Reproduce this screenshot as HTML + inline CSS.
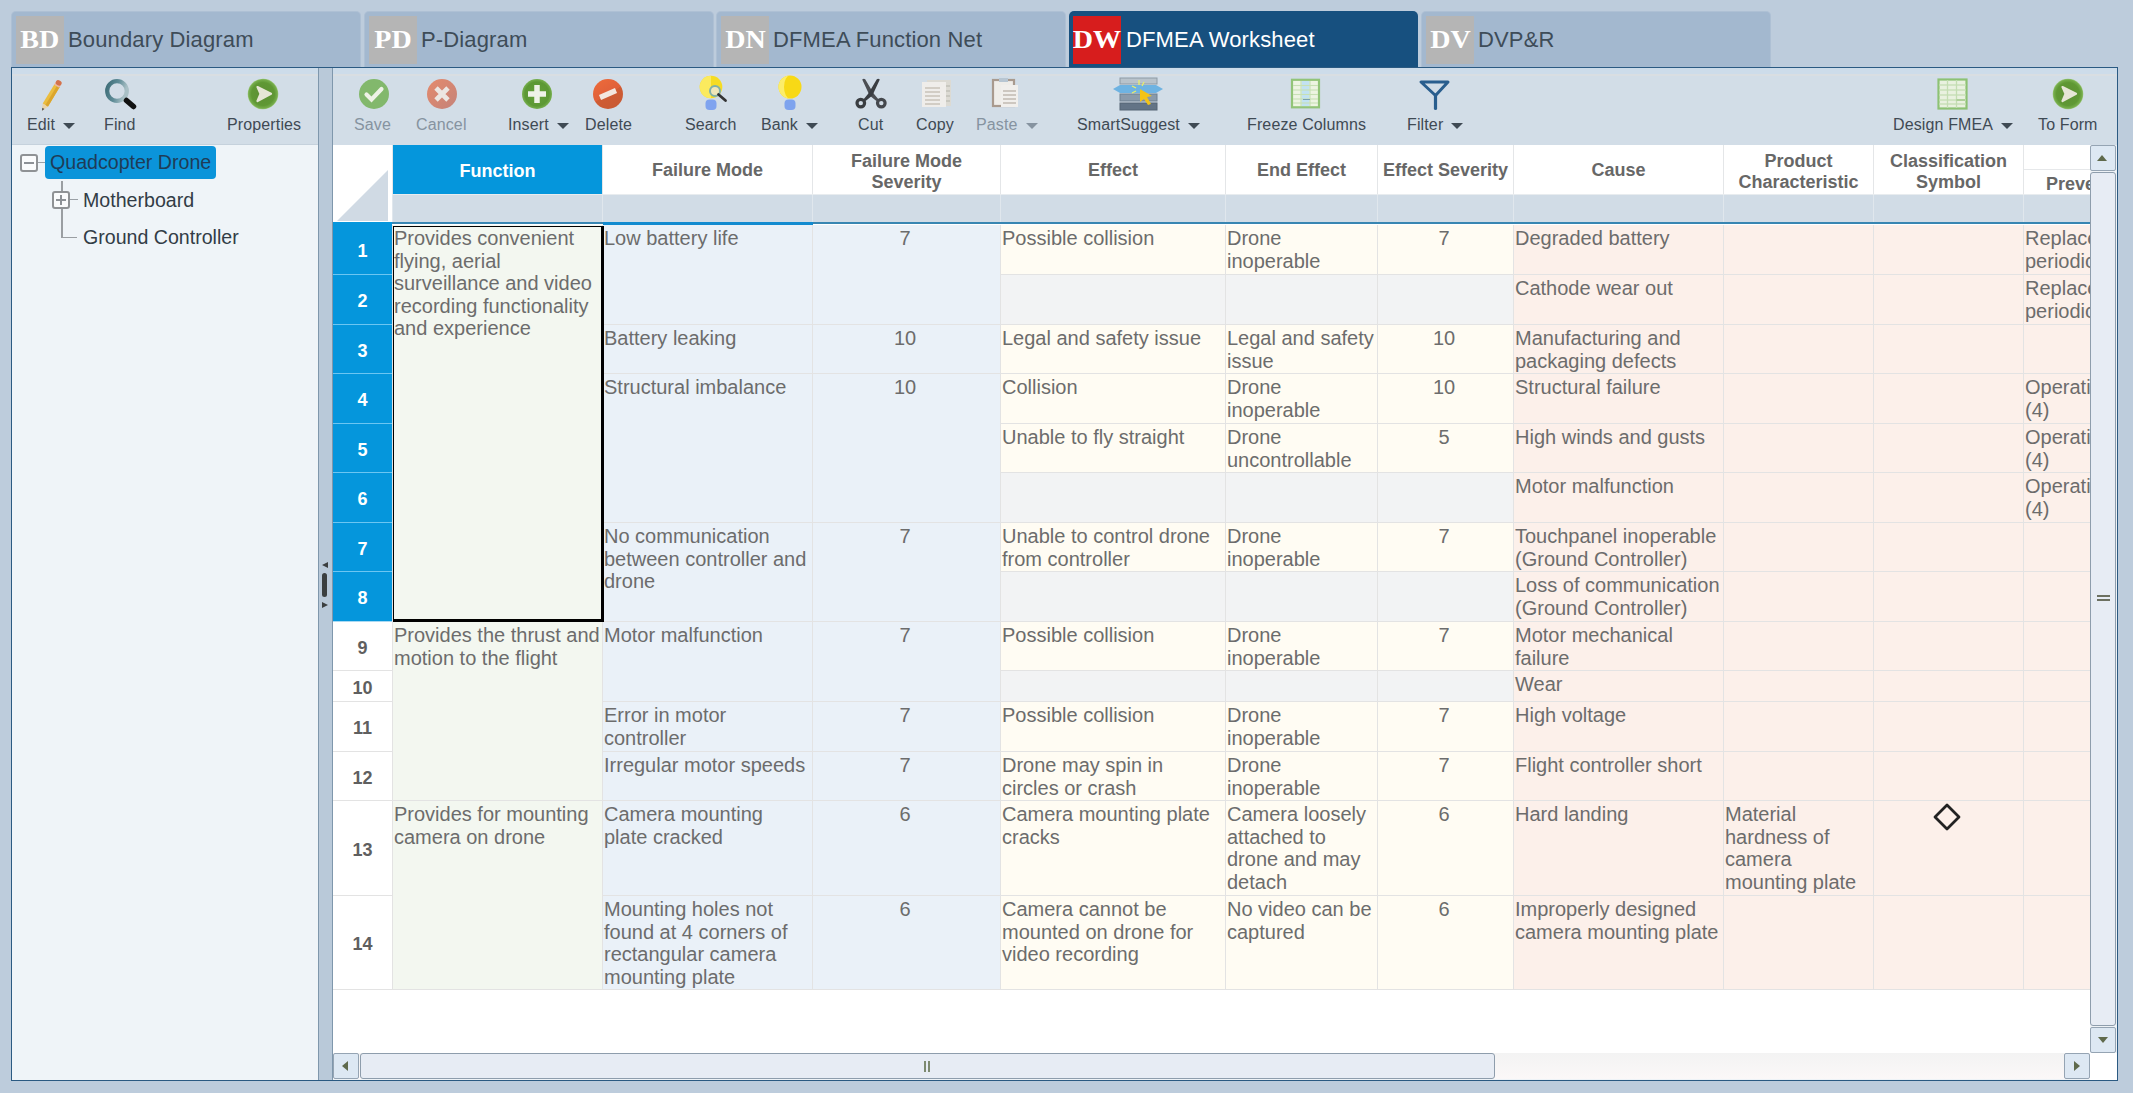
<!DOCTYPE html><html><head><meta charset="utf-8"><style>
*{box-sizing:border-box}
html,body{margin:0;padding:0}
body{width:2133px;height:1093px;position:relative;overflow:hidden;background:#bdccdc;font-family:'Liberation Sans', sans-serif;}
.ab{position:absolute}
.tab{position:absolute;top:11px;height:57px;width:350px;background:#a3b8cf;border-radius:5px 5px 0 0;box-shadow:inset 0 0 0 1px rgba(255,255,255,0.12)}
.badge{position:absolute;left:5px;top:5px;width:48px;height:48px;background:#b5b5b5;color:#fff;font-family:'Liberation Serif', serif;font-weight:bold;font-size:25.5px;line-height:47px;text-align:center;transform-origin:center}
.tabt{position:absolute;left:57px;top:0;height:57px;line-height:58px;font-size:22px;letter-spacing:0.14px;color:#3e4c58;white-space:nowrap}
.lbl{position:absolute;top:115px;font-size:16px;line-height:20px;letter-spacing:0.13px;color:#3f4a54;white-space:nowrap}
.lbl.dis{color:#8693a0}
.car{display:inline-block;width:0;height:0;border-left:6px solid transparent;border-right:6px solid transparent;border-top:6.5px solid #3f4a54;margin-left:8px;vertical-align:1.5px}
.dis .car{border-top-color:#8693a0}
.tn{position:absolute;font-size:19.6px;line-height:23px;color:#323c46;white-space:nowrap}
.c{position:absolute;overflow:hidden;font-size:20px;line-height:22.5px;color:#6c6c6c;padding:2px 2px 0 2px;word-wrap:break-word}
.hc{position:absolute;background:#fff;font-size:18px;font-weight:bold;color:#676767;text-align:center;display:flex;align-items:center;justify-content:center;line-height:21px}
.rh{position:absolute;left:333px;width:59px;font-size:18px;font-weight:bold;text-align:center;display:flex;align-items:center;justify-content:center}
</style></head><body>

<div class="tab" style="left:11px"><div class="badge"><span style="display:inline-block;transform:scaleX(1.1)">BD</span></div><div class="tabt">Boundary Diagram</div></div>
<div class="tab" style="left:364px"><div class="badge"><span style="display:inline-block;transform:scaleX(1.1)">PD</span></div><div class="tabt">P-Diagram</div></div>
<div class="tab" style="left:716px"><div class="badge"><span style="display:inline-block;transform:scaleX(1.1)">DN</span></div><div class="tabt">DFMEA Function Net</div></div>
<div class="tab" style="left:1069px;width:349px;background:#17507f;box-shadow:none"><div class="badge" style="left:4px;background:#d71d1d"><span style="display:inline-block;transform:scaleX(1.1)">DW</span></div><div class="tabt" style="left:57px;color:#fff">DFMEA Worksheet</div></div>
<div class="tab" style="left:1421px"><div class="badge"><span style="display:inline-block;transform:scaleX(1.1)">DV</span></div><div class="tabt">DVP&amp;R</div></div>
<div class="ab" style="left:11px;top:67px;width:2107px;height:1014px;border:1px solid #2b5a82;background:#eef3f7"></div>
<div class="ab" style="left:12px;top:68px;width:306px;height:77px;background:#d2dde7;border-bottom:1px solid #c5d1dc"></div>
<div class="ab" style="left:12px;top:68px;width:306px;height:6px;background:#cddcea"></div><div class="ab" style="left:12px;top:74px;width:306px;height:2px;background:#d9dee2"></div>
<div class="ab" style="left:12px;top:145px;width:306px;height:935px;background:#eff4f8"></div>
<div class="ab" style="left:318px;top:68px;width:15px;height:1012px;background:#b9c9d9;border-left:1px solid #7f97ac;border-right:1px solid #7f97ac"></div>
<div class="ab" style="left:322px;top:573px;width:5px;height:24px;background:#3b3f40;border-radius:2.5px"></div>
<div class="ab" style="left:322px;top:562px;width:0;height:0;border-top:3.5px solid transparent;border-bottom:3.5px solid transparent;border-right:6px solid #3b3f40"></div>
<div class="ab" style="left:322px;top:602px;width:0;height:0;border-top:3.5px solid transparent;border-bottom:3.5px solid transparent;border-left:6px solid #3b3f40"></div>
<div class="ab" style="left:333px;top:68px;width:1784px;height:77px;background:#d2dde7"></div>
<div class="ab" style="left:333px;top:68px;width:1784px;height:6px;background:#cddcea"></div><div class="ab" style="left:333px;top:74px;width:1784px;height:2px;background:#d9dee2"></div>
<svg class="ab" style="left:36px;top:74px;" width="32" height="40" viewBox="0 0 32 40"><g transform="rotate(31 16 20)"><rect x="13" y="10" width="6" height="23" fill="#ebbd3e"/><rect x="16" y="10" width="3" height="23" fill="#dba52c"/><rect x="13" y="8" width="6" height="3" fill="#e8b8a8"/><rect x="13" y="4.5" width="6" height="5" rx="2.5" fill="#d4724c"/><path d="M13 33 L19 33 L16 39.5 Z" fill="#ead3a6"/><path d="M14.8 36.8 L17.2 36.8 L16 39.5 Z" fill="#4a4a4a"/></g></svg>
<svg class="ab" style="left:100px;top:74px;" width="40" height="40" viewBox="0 0 40 40"><defs><linearGradient id="mg" x1="0" y1="0" x2="1" y2="0.3"><stop offset="0" stop-color="#3e6d78"/><stop offset="0.55" stop-color="#5f8c97"/><stop offset="1" stop-color="#a9c0c6"/></linearGradient></defs><circle cx="17" cy="17" r="9.8" fill="none" stroke="url(#mg)" stroke-width="4.2"/><line x1="26.5" y1="26.5" x2="33.5" y2="32.5" stroke="#111" stroke-width="5.5" stroke-linecap="round"/></svg>
<svg class="ab" style="left:246px;top:77px;" width="34" height="34" viewBox="0 0 34 34"><defs><radialGradient id="g263" cx="50%" cy="50%" r="50%"><stop offset="0" stop-color="#5d8f35"/><stop offset="0.75" stop-color="#5f9834"/><stop offset="0.93" stop-color="#76ad4c"/><stop offset="1" stop-color="#9cc77a"/></radialGradient></defs><circle cx="17" cy="17" r="15.3" fill="url(#g263)"/><path d="M11.5 10 L25 16.8 L11.5 24 L14.5 16.8 Z" fill="#e6e6d6" stroke="#e6e6d6" stroke-width="2.2" stroke-linejoin="round"/></svg>
<svg class="ab" style="left:2051px;top:77px;" width="34" height="34" viewBox="0 0 34 34"><defs><radialGradient id="g2068" cx="50%" cy="50%" r="50%"><stop offset="0" stop-color="#5d8f35"/><stop offset="0.75" stop-color="#5f9834"/><stop offset="0.93" stop-color="#76ad4c"/><stop offset="1" stop-color="#9cc77a"/></radialGradient></defs><circle cx="17" cy="17" r="15.3" fill="url(#g2068)"/><path d="M11.5 10 L25 16.8 L11.5 24 L14.5 16.8 Z" fill="#e6e6d6" stroke="#e6e6d6" stroke-width="2.2" stroke-linejoin="round"/></svg>
<svg class="ab" style="left:357px;top:77px;" width="34" height="34" viewBox="0 0 34 34"><circle cx="17" cy="17" r="15" fill="#82b86c"/><path d="M9.5 17.5 L14.5 22.5 L24.5 12" fill="none" stroke="#eef2e6" stroke-width="4.2" stroke-linecap="round"/></svg>
<svg class="ab" style="left:425px;top:77px;" width="34" height="34" viewBox="0 0 34 34"><defs><linearGradient id="cg" x1="0" y1="0" x2="1" y2="1"><stop offset="0" stop-color="#e58a6c"/><stop offset="1" stop-color="#c4837a"/></linearGradient></defs><circle cx="17" cy="17" r="15" fill="url(#cg)"/><path d="M11 11 L23 23 M23 11 L11 23" stroke="#ece6e2" stroke-width="4.8"/></svg>
<svg class="ab" style="left:520px;top:77px;" width="34" height="34" viewBox="0 0 34 34"><defs><radialGradient id="ig" cx="50%" cy="50%" r="50%"><stop offset="0" stop-color="#64a03a"/><stop offset="0.8" stop-color="#5c9834"/><stop offset="1" stop-color="#78b050"/></radialGradient></defs><circle cx="17" cy="17" r="15" fill="url(#ig)"/><path d="M17 8 V26 M8 17 H26" stroke="#eef2e8" stroke-width="5.5"/></svg>
<svg class="ab" style="left:591px;top:77px;" width="34" height="34" viewBox="0 0 34 34"><defs><linearGradient id="dg" x1="0.2" y1="0" x2="0.8" y2="1"><stop offset="0" stop-color="#ec6a3a"/><stop offset="0.5" stop-color="#e0603a"/><stop offset="0.51" stop-color="#cf5c34"/><stop offset="1" stop-color="#c85a34"/></linearGradient></defs><circle cx="17" cy="17" r="15" fill="url(#dg)"/><path d="M9 20.5 L25 13.5" stroke="#f3e7df" stroke-width="5.2"/></svg>
<svg class="ab" style="left:695px;top:72px;" width="36" height="40" viewBox="0 0 36 40"><circle cx="16" cy="15" r="11.3" fill="#f6dc22"/><path d="M16 3.7 A11.3 11.3 0 0 0 16 26.3 Z" fill="#fbea5e"/><rect x="10.5" y="27.5" width="11" height="10.5" rx="4" fill="#7fa3ef"/><circle cx="20" cy="19" r="5" fill="#efe6b8" stroke="#7fb0a8" stroke-width="2"/><line x1="23.5" y1="22.5" x2="30.5" y2="28.5" stroke="#333" stroke-width="2.8" stroke-linecap="round"/></svg>
<svg class="ab" style="left:774px;top:72px;" width="32" height="40" viewBox="0 0 32 40"><circle cx="16" cy="15" r="11.5" fill="#f8d916"/><path d="M16 3.5 A11.5 11.5 0 0 0 16 26.5 A6 11.5 0 0 1 16 3.5 Z" fill="#fced6a"/><rect x="10.5" y="27.5" width="11" height="10.5" rx="4" fill="#7ea3ee"/></svg>
<svg class="ab" style="left:855px;top:76px;" width="32" height="34" viewBox="0 0 32 34"><path d="M7.2 3.6 Q8.7 2.2 10.2 3.3 L18.6 17.5 L23.6 23.6 L21.4 25 L14.6 19.6 Z" fill="#4b4e53"/><path d="M24.8 3.6 Q23.3 2.2 21.8 3.3 L13.4 17.5 L8.4 23.6 L10.6 25 L17.4 19.6 Z" fill="#3a3d42"/><circle cx="5.8" cy="27.1" r="3.8" fill="none" stroke="#3a3d41" stroke-width="3.2"/><circle cx="26.3" cy="27.1" r="3.8" fill="none" stroke="#45484d" stroke-width="3.2"/></svg>
<svg class="ab" style="left:919px;top:77px;" width="34" height="32" viewBox="0 0 34 32"><rect x="8" y="3" width="24" height="26" fill="#dcdad3"/><rect x="3" y="5" width="24" height="25" fill="#efedea"/><g stroke="#c9c2b8" stroke-width="1.5"><line x1="6" y1="11" x2="21" y2="11"/><line x1="6" y1="15" x2="21" y2="15"/><line x1="6" y1="19" x2="21" y2="19"/><line x1="6" y1="23" x2="21" y2="23"/><line x1="6" y1="27" x2="21" y2="27"/></g><g stroke="#c2c0b8" stroke-width="1.5"><line x1="27" y1="9" x2="31" y2="9"/><line x1="27" y1="14" x2="31" y2="14"/><line x1="27" y1="19" x2="31" y2="19"/><line x1="27" y1="24" x2="31" y2="24"/></g></svg>
<svg class="ab" style="left:990px;top:76px;" width="30" height="34" viewBox="0 0 30 34"><rect x="3" y="4" width="21" height="26" fill="#efede9" stroke="#a99a8e" stroke-width="2.2"/><rect x="9" y="2" width="9" height="4" fill="#b8c6d2"/><rect x="11" y="9" width="17" height="22" fill="#f1efec"/><g stroke="#bdb7ae" stroke-width="1.4"><line x1="13" y1="15" x2="26" y2="15"/><line x1="13" y1="19" x2="26" y2="19"/><line x1="13" y1="23" x2="26" y2="23"/><line x1="13" y1="27" x2="26" y2="27"/></g></svg>
<svg class="ab" style="left:1110px;top:74px;" width="56" height="38" viewBox="0 0 56 38"><rect x="10" y="4" width="37" height="6" fill="#b9c3cb" stroke="#8e9ba6" stroke-width="1"/><rect x="10" y="20" width="37" height="7" fill="#8a9aaa" stroke="#6f8090" stroke-width="1"/><rect x="10" y="29" width="37" height="7" fill="#637486" stroke="#556575" stroke-width="1"/><path d="M3 15 L10 11 L46 11 L53 15 L46 19 L10 19 Z" fill="#6eb3e2"/><path d="M30 15 L42 22 L37 23 L41 30 L38 31 L34 25 L30 28 Z" fill="#f3c317"/><g stroke="#e9ef6a" stroke-width="1.3"><line x1="29" y1="6" x2="29" y2="11"/><line x1="22" y1="12" x2="26" y2="14"/><line x1="22" y1="19" x2="26" y2="17"/><line x1="34" y1="8" x2="32" y2="12"/></g></svg>
<svg class="ab" style="left:1290px;top:78px;" width="32" height="32" viewBox="0 0 32 32"><rect x="2" y="1.8" width="27" height="27.5" fill="#edf4e2" stroke="#92c478" stroke-width="2.2"/><rect x="11.5" y="3" width="8" height="25" fill="#c2e2f2"/><g stroke="#c7e0b4" stroke-width="1.1"><line x1="3" y1="7.5" x2="28" y2="7.5"/><line x1="3" y1="12" x2="28" y2="12"/><line x1="3" y1="16.5" x2="28" y2="16.5"/><line x1="3" y1="21" x2="28" y2="21"/><line x1="3" y1="25" x2="28" y2="25"/><line x1="11" y1="3" x2="11" y2="28"/><line x1="20" y1="3" x2="20" y2="28"/></g><path d="M20 21.5 L13 21.5" stroke="#7aa0b0" stroke-width="1"/></svg>
<svg class="ab" style="left:1418px;top:79px;" width="36" height="32" viewBox="0 0 36 32"><path d="M3 3 L30 3 L17.5 16.5 Z" fill="none" stroke="#295e8e" stroke-width="3" stroke-linejoin="round"/><line x1="17.5" y1="16" x2="17.5" y2="29.5" stroke="#295e8e" stroke-width="3.2" stroke-linecap="round"/></svg>
<svg class="ab" style="left:1936px;top:77px;" width="34" height="34" viewBox="0 0 34 34"><rect x="2.5" y="2.5" width="28" height="29" fill="#e9f1df" stroke="#8dc274" stroke-width="2.2"/><g stroke="#c4ddb2" stroke-width="1.3"><line x1="3" y1="8" x2="30" y2="8"/><line x1="3" y1="13" x2="30" y2="13"/><line x1="3" y1="18" x2="30" y2="18"/><line x1="3" y1="23" x2="30" y2="23"/><line x1="3" y1="27" x2="30" y2="27"/><line x1="11.5" y1="3" x2="11.5" y2="31"/><line x1="20.5" y1="3" x2="20.5" y2="31"/></g><path d="M20.5 23 H29" stroke="#9cc486" stroke-width="1.3"/></svg>
<div class="lbl" style="left:27px">Edit<span class="car"></span></div>
<div class="lbl" style="left:104px">Find</div>
<div class="lbl" style="left:227px">Properties</div>
<div class="lbl dis" style="left:354px">Save</div>
<div class="lbl dis" style="left:416px">Cancel</div>
<div class="lbl" style="left:508px">Insert<span class="car"></span></div>
<div class="lbl" style="left:585px">Delete</div>
<div class="lbl" style="left:685px">Search</div>
<div class="lbl" style="left:761px">Bank<span class="car"></span></div>
<div class="lbl" style="left:858px">Cut</div>
<div class="lbl" style="left:916px">Copy</div>
<div class="lbl dis" style="left:976px">Paste<span class="car"></span></div>
<div class="lbl" style="left:1077px">SmartSuggest<span class="car"></span></div>
<div class="lbl" style="left:1247px">Freeze Columns</div>
<div class="lbl" style="left:1407px">Filter<span class="car"></span></div>
<div class="lbl" style="left:1893px">Design FMEA<span class="car"></span></div>
<div class="lbl" style="left:2038px">To Form</div>
<div class="ab" style="left:45px;top:146px;width:171px;height:33px;background:#0b94da;border-radius:4px"></div>
<div class="tn" style="left:50px;top:150.5px;color:#1f3c57">Quadcopter Drone</div>
<div class="tn" style="left:83px;top:189px">Motherboard</div>
<div class="tn" style="left:83px;top:226px">Ground Controller</div>
<div class="ab" style="left:37px;top:162px;width:8px;height:1px;background:#9aa0a6"></div>
<div class="ab" style="left:61px;top:181px;width:1.5px;height:10px;background:#9a9ea2"></div>
<div class="ab" style="left:61px;top:209px;width:1.5px;height:28px;background:#9a9ea2"></div>
<div class="ab" style="left:61px;top:236.5px;width:16px;height:1.5px;background:#9a9ea2"></div>
<div class="ab" style="left:70px;top:199px;width:8px;height:1px;background:#9aa0a6"></div>
<div class="ab" style="left:20px;top:154px;width:17.5px;height:18px;border:2px solid #8f9295;border-radius:3px;background:#fafbfc"></div>
<div class="ab" style="left:24px;top:162px;width:10px;height:2px;background:#8d9196"></div>
<div class="ab" style="left:52px;top:191px;width:18px;height:18px;border:2px solid #8f9295;border-radius:3px;background:#fafbfc"></div>
<div class="ab" style="left:56px;top:199px;width:10px;height:1.5px;background:#8d9196"></div>
<div class="ab" style="left:60.25px;top:195px;width:1.5px;height:10px;background:#8d9196"></div>
<div class="ab" style="left:333px;top:145px;width:1757px;height:908px;background:#fff;overflow:hidden">
<div class="ab" style="left:0px;top:50px;width:1960px;height:27px;background:#d1dce6"></div>
<div class="ab" style="left:59px;top:0px;width:1px;height:50px;background:#e4e6e8"></div>
<div class="ab" style="left:59px;top:50px;width:1px;height:27px;background:#e0e7ed"></div>
<div class="ab" style="left:269px;top:0px;width:1px;height:50px;background:#e4e6e8"></div>
<div class="ab" style="left:269px;top:50px;width:1px;height:27px;background:#e0e7ed"></div>
<div class="ab" style="left:479px;top:0px;width:1px;height:50px;background:#e4e6e8"></div>
<div class="ab" style="left:479px;top:50px;width:1px;height:27px;background:#e0e7ed"></div>
<div class="ab" style="left:667px;top:0px;width:1px;height:50px;background:#e4e6e8"></div>
<div class="ab" style="left:667px;top:50px;width:1px;height:27px;background:#e0e7ed"></div>
<div class="ab" style="left:892px;top:0px;width:1px;height:50px;background:#e4e6e8"></div>
<div class="ab" style="left:892px;top:50px;width:1px;height:27px;background:#e0e7ed"></div>
<div class="ab" style="left:1044px;top:0px;width:1px;height:50px;background:#e4e6e8"></div>
<div class="ab" style="left:1044px;top:50px;width:1px;height:27px;background:#e0e7ed"></div>
<div class="ab" style="left:1180px;top:0px;width:1px;height:50px;background:#e4e6e8"></div>
<div class="ab" style="left:1180px;top:50px;width:1px;height:27px;background:#e0e7ed"></div>
<div class="ab" style="left:1390px;top:0px;width:1px;height:50px;background:#e4e6e8"></div>
<div class="ab" style="left:1390px;top:50px;width:1px;height:27px;background:#e0e7ed"></div>
<div class="ab" style="left:1540px;top:0px;width:1px;height:50px;background:#e4e6e8"></div>
<div class="ab" style="left:1540px;top:50px;width:1px;height:27px;background:#e0e7ed"></div>
<div class="ab" style="left:1690px;top:0px;width:1px;height:50px;background:#e4e6e8"></div>
<div class="ab" style="left:1690px;top:50px;width:1px;height:27px;background:#e0e7ed"></div>
<div class="ab" style="left:0px;top:49px;width:1960px;height:1px;background:#e8ecef"></div>
<div class="ab" style="left:0px;top:0px;width:59px;height:78px;background:#fff"><svg width="59" height="78" style="position:absolute;left:0;top:0"><path d="M4 76 L55 25 L55 76 Z" fill="#d0dae4"/></svg></div>
<div class="ab" style="left:60px;top:0px;width:209px;height:49px;background:#0596dc;color:#fff;font-size:18px;font-weight:bold;display:flex;align-items:center;justify-content:center;line-height:21px;text-align:center;padding-top:3px">Function</div>
<div class="ab" style="left:270px;top:0px;width:209px;height:49px;color:#676767;font-size:18px;font-weight:bold;display:flex;align-items:center;justify-content:center;line-height:21.4px;text-align:center;padding-top:3px">Failure Mode</div>
<div class="ab" style="left:480px;top:0px;width:187px;height:49px;color:#676767;font-size:18px;font-weight:bold;display:flex;align-items:center;justify-content:center;line-height:21.4px;text-align:center;padding-top:5px">Failure Mode<br>Severity</div>
<div class="ab" style="left:668px;top:0px;width:224px;height:49px;color:#676767;font-size:18px;font-weight:bold;display:flex;align-items:center;justify-content:center;line-height:21.4px;text-align:center;padding-top:3px">Effect</div>
<div class="ab" style="left:893px;top:0px;width:151px;height:49px;color:#676767;font-size:18px;font-weight:bold;display:flex;align-items:center;justify-content:center;line-height:21.4px;text-align:center;padding-top:3px">End Effect</div>
<div class="ab" style="left:1045px;top:0px;width:135px;height:49px;color:#676767;font-size:18px;font-weight:bold;display:flex;align-items:center;justify-content:center;line-height:21.4px;text-align:center;padding-top:3px">Effect Severity</div>
<div class="ab" style="left:1181px;top:0px;width:209px;height:49px;color:#676767;font-size:18px;font-weight:bold;display:flex;align-items:center;justify-content:center;line-height:21.4px;text-align:center;padding-top:3px">Cause</div>
<div class="ab" style="left:1391px;top:0px;width:149px;height:49px;color:#676767;font-size:18px;font-weight:bold;display:flex;align-items:center;justify-content:center;line-height:21.4px;text-align:center;padding-top:5px">Product<br>Characteristic</div>
<div class="ab" style="left:1541px;top:0px;width:149px;height:49px;color:#676767;font-size:18px;font-weight:bold;display:flex;align-items:center;justify-content:center;line-height:21.4px;text-align:center;padding-top:5px">Classification<br>Symbol</div>
<div class="ab" style="left:1691px;top:24px;width:300px;height:1px;background:#e6e8ea"></div>
<div class="ab" style="left:1691px;top:25px;width:260px;height:24px;color:#676767;font-size:18px;font-weight:bold;line-height:21px;padding-left:22px;white-space:nowrap;padding-top:4px">Prevention Controls</div>
<div class="ab" style="left:0px;top:77px;width:1960px;height:2px;background:#3886b2"></div>
<div class="ab" style="left:270px;top:77px;width:210px;height:3px;background:#128bd0"></div>
<div class="ab" style="left:0px;top:77px;width:59px;height:3px;background:#0596dc"></div>
<div class="ab" style="left:0px;top:80px;width:1960px;height:765px;background:#e3e3e3"></div>
<div class="ab" style="left:0px;top:80px;width:59px;height:49px;background:#0596dc;color:#fff;font-size:18px;font-weight:bold;display:flex;align-items:center;justify-content:center;padding-top:4px">1</div>
<div class="ab" style="left:0px;top:130px;width:59px;height:49px;background:#0596dc;color:#fff;font-size:18px;font-weight:bold;display:flex;align-items:center;justify-content:center;padding-top:4px">2</div>
<div class="ab" style="left:0px;top:180px;width:59px;height:48px;background:#0596dc;color:#fff;font-size:18px;font-weight:bold;display:flex;align-items:center;justify-content:center;padding-top:4px">3</div>
<div class="ab" style="left:0px;top:229px;width:59px;height:49px;background:#0596dc;color:#fff;font-size:18px;font-weight:bold;display:flex;align-items:center;justify-content:center;padding-top:4px">4</div>
<div class="ab" style="left:0px;top:279px;width:59px;height:48px;background:#0596dc;color:#fff;font-size:18px;font-weight:bold;display:flex;align-items:center;justify-content:center;padding-top:4px">5</div>
<div class="ab" style="left:0px;top:328px;width:59px;height:49px;background:#0596dc;color:#fff;font-size:18px;font-weight:bold;display:flex;align-items:center;justify-content:center;padding-top:4px">6</div>
<div class="ab" style="left:0px;top:378px;width:59px;height:48px;background:#0596dc;color:#fff;font-size:18px;font-weight:bold;display:flex;align-items:center;justify-content:center;padding-top:4px">7</div>
<div class="ab" style="left:0px;top:427px;width:59px;height:49px;background:#0596dc;color:#fff;font-size:18px;font-weight:bold;display:flex;align-items:center;justify-content:center;padding-top:4px">8</div>
<div class="ab" style="left:0px;top:477px;width:59px;height:48px;background:#fff;color:#5f5f5f;font-size:18px;font-weight:bold;display:flex;align-items:center;justify-content:center;padding-top:4px">9</div>
<div class="ab" style="left:0px;top:526px;width:59px;height:30px;background:#fff;color:#5f5f5f;font-size:18px;font-weight:bold;display:flex;align-items:center;justify-content:center;padding-top:4px">10</div>
<div class="ab" style="left:0px;top:557px;width:59px;height:49px;background:#fff;color:#5f5f5f;font-size:18px;font-weight:bold;display:flex;align-items:center;justify-content:center;padding-top:4px">11</div>
<div class="ab" style="left:0px;top:607px;width:59px;height:48px;background:#fff;color:#5f5f5f;font-size:18px;font-weight:bold;display:flex;align-items:center;justify-content:center;padding-top:4px">12</div>
<div class="ab" style="left:0px;top:656px;width:59px;height:94px;background:#fff;color:#5f5f5f;font-size:18px;font-weight:bold;display:flex;align-items:center;justify-content:center;padding-top:4px">13</div>
<div class="ab" style="left:0px;top:751px;width:59px;height:93px;background:#fff;color:#5f5f5f;font-size:18px;font-weight:bold;display:flex;align-items:center;justify-content:center;padding-top:4px">14</div>
<div class="ab" style="left:0px;top:129px;width:59px;height:1px;background:#6cc6f2"></div>
<div class="ab" style="left:0px;top:179px;width:59px;height:1px;background:#6cc6f2"></div>
<div class="ab" style="left:0px;top:228px;width:59px;height:1px;background:#6cc6f2"></div>
<div class="ab" style="left:0px;top:278px;width:59px;height:1px;background:#6cc6f2"></div>
<div class="ab" style="left:0px;top:327px;width:59px;height:1px;background:#6cc6f2"></div>
<div class="ab" style="left:0px;top:377px;width:59px;height:1px;background:#6cc6f2"></div>
<div class="ab" style="left:0px;top:426px;width:59px;height:1px;background:#6cc6f2"></div>
<div class="ab" style="left:0px;top:476px;width:59px;height:1px;background:#a9d9f2"></div>
<div class="ab" style="left:60px;top:80px;width:209px;height:396px;background:#f3f7f0;overflow:hidden;font-size:20px;line-height:22.5px;color:#6c6c6c;padding:2px 1px 0 1px;">Provides convenient flying, aerial surveillance and video recording functionality and experience</div>
<div class="ab" style="left:60px;top:477px;width:209px;height:178px;background:#f3f7f0;overflow:hidden;font-size:20px;line-height:22.5px;color:#6c6c6c;padding:2px 1px 0 1px;">Provides the thrust and motion to the flight</div>
<div class="ab" style="left:60px;top:656px;width:209px;height:188px;background:#f3f7f0;overflow:hidden;font-size:20px;line-height:22.5px;color:#6c6c6c;padding:2px 1px 0 1px;">Provides for mounting camera on drone</div>
<div class="ab" style="left:270px;top:80px;width:209px;height:99px;background:#eaf1f8;overflow:hidden;font-size:20px;line-height:22.5px;color:#6c6c6c;padding:2px 3px 0 1px;">Low battery life</div>
<div class="ab" style="left:480px;top:80px;width:187px;height:99px;background:#eaf1f8;overflow:hidden;font-size:20px;line-height:22.5px;color:#6c6c6c;padding:2px 3px 0 1px;text-align:center;padding:2px 4px 0 1px;">7</div>
<div class="ab" style="left:270px;top:180px;width:209px;height:48px;background:#eaf1f8;overflow:hidden;font-size:20px;line-height:22.5px;color:#6c6c6c;padding:2px 3px 0 1px;">Battery leaking</div>
<div class="ab" style="left:480px;top:180px;width:187px;height:48px;background:#eaf1f8;overflow:hidden;font-size:20px;line-height:22.5px;color:#6c6c6c;padding:2px 3px 0 1px;text-align:center;padding:2px 4px 0 1px;">10</div>
<div class="ab" style="left:270px;top:229px;width:209px;height:148px;background:#eaf1f8;overflow:hidden;font-size:20px;line-height:22.5px;color:#6c6c6c;padding:2px 3px 0 1px;">Structural imbalance</div>
<div class="ab" style="left:480px;top:229px;width:187px;height:148px;background:#eaf1f8;overflow:hidden;font-size:20px;line-height:22.5px;color:#6c6c6c;padding:2px 3px 0 1px;text-align:center;padding:2px 4px 0 1px;">10</div>
<div class="ab" style="left:270px;top:378px;width:209px;height:98px;background:#eaf1f8;overflow:hidden;font-size:20px;line-height:22.5px;color:#6c6c6c;padding:2px 3px 0 1px;">No communication between controller and drone</div>
<div class="ab" style="left:480px;top:378px;width:187px;height:98px;background:#eaf1f8;overflow:hidden;font-size:20px;line-height:22.5px;color:#6c6c6c;padding:2px 3px 0 1px;text-align:center;padding:2px 4px 0 1px;">7</div>
<div class="ab" style="left:270px;top:477px;width:209px;height:79px;background:#eaf1f8;overflow:hidden;font-size:20px;line-height:22.5px;color:#6c6c6c;padding:2px 3px 0 1px;">Motor malfunction</div>
<div class="ab" style="left:480px;top:477px;width:187px;height:79px;background:#eaf1f8;overflow:hidden;font-size:20px;line-height:22.5px;color:#6c6c6c;padding:2px 3px 0 1px;text-align:center;padding:2px 4px 0 1px;">7</div>
<div class="ab" style="left:270px;top:557px;width:209px;height:49px;background:#eaf1f8;overflow:hidden;font-size:20px;line-height:22.5px;color:#6c6c6c;padding:2px 3px 0 1px;">Error in motor controller</div>
<div class="ab" style="left:480px;top:557px;width:187px;height:49px;background:#eaf1f8;overflow:hidden;font-size:20px;line-height:22.5px;color:#6c6c6c;padding:2px 3px 0 1px;text-align:center;padding:2px 4px 0 1px;">7</div>
<div class="ab" style="left:270px;top:607px;width:209px;height:48px;background:#eaf1f8;overflow:hidden;font-size:20px;line-height:22.5px;color:#6c6c6c;padding:2px 3px 0 1px;">Irregular motor speeds</div>
<div class="ab" style="left:480px;top:607px;width:187px;height:48px;background:#eaf1f8;overflow:hidden;font-size:20px;line-height:22.5px;color:#6c6c6c;padding:2px 3px 0 1px;text-align:center;padding:2px 4px 0 1px;">7</div>
<div class="ab" style="left:270px;top:656px;width:209px;height:94px;background:#eaf1f8;overflow:hidden;font-size:20px;line-height:22.5px;color:#6c6c6c;padding:2px 3px 0 1px;">Camera mounting plate cracked</div>
<div class="ab" style="left:480px;top:656px;width:187px;height:94px;background:#eaf1f8;overflow:hidden;font-size:20px;line-height:22.5px;color:#6c6c6c;padding:2px 3px 0 1px;text-align:center;padding:2px 4px 0 1px;">6</div>
<div class="ab" style="left:270px;top:751px;width:209px;height:93px;background:#eaf1f8;overflow:hidden;font-size:20px;line-height:22.5px;color:#6c6c6c;padding:2px 3px 0 1px;">Mounting holes not found at 4 corners of rectangular camera mounting plate</div>
<div class="ab" style="left:480px;top:751px;width:187px;height:93px;background:#eaf1f8;overflow:hidden;font-size:20px;line-height:22.5px;color:#6c6c6c;padding:2px 3px 0 1px;text-align:center;padding:2px 4px 0 1px;">6</div>
<div class="ab" style="left:668px;top:80px;width:224px;height:49px;background:#fffcf3;overflow:hidden;font-size:20px;line-height:22.5px;color:#6c6c6c;padding:2px 3px 0 1px;">Possible collision</div>
<div class="ab" style="left:893px;top:80px;width:151px;height:49px;background:#fffcf3;overflow:hidden;font-size:20px;line-height:22.5px;color:#6c6c6c;padding:2px 3px 0 1px;">Drone inoperable</div>
<div class="ab" style="left:1045px;top:80px;width:135px;height:49px;background:#fffcf3;overflow:hidden;font-size:20px;line-height:22.5px;color:#6c6c6c;padding:2px 3px 0 1px;text-align:center;padding:2px 4px 0 1px;">7</div>
<div class="ab" style="left:668px;top:130px;width:224px;height:49px;background:#f2f3f4;overflow:hidden;font-size:20px;line-height:22.5px;color:#6c6c6c;padding:2px 3px 0 1px;"></div>
<div class="ab" style="left:893px;top:130px;width:151px;height:49px;background:#f2f3f4;overflow:hidden;font-size:20px;line-height:22.5px;color:#6c6c6c;padding:2px 3px 0 1px;"></div>
<div class="ab" style="left:1045px;top:130px;width:135px;height:49px;background:#f2f3f4;overflow:hidden;font-size:20px;line-height:22.5px;color:#6c6c6c;padding:2px 3px 0 1px;"></div>
<div class="ab" style="left:668px;top:180px;width:224px;height:48px;background:#fffcf3;overflow:hidden;font-size:20px;line-height:22.5px;color:#6c6c6c;padding:2px 3px 0 1px;">Legal and safety issue</div>
<div class="ab" style="left:893px;top:180px;width:151px;height:48px;background:#fffcf3;overflow:hidden;font-size:20px;line-height:22.5px;color:#6c6c6c;padding:2px 3px 0 1px;">Legal and safety issue</div>
<div class="ab" style="left:1045px;top:180px;width:135px;height:48px;background:#fffcf3;overflow:hidden;font-size:20px;line-height:22.5px;color:#6c6c6c;padding:2px 3px 0 1px;text-align:center;padding:2px 4px 0 1px;">10</div>
<div class="ab" style="left:668px;top:229px;width:224px;height:49px;background:#fffcf3;overflow:hidden;font-size:20px;line-height:22.5px;color:#6c6c6c;padding:2px 3px 0 1px;">Collision</div>
<div class="ab" style="left:893px;top:229px;width:151px;height:49px;background:#fffcf3;overflow:hidden;font-size:20px;line-height:22.5px;color:#6c6c6c;padding:2px 3px 0 1px;">Drone inoperable</div>
<div class="ab" style="left:1045px;top:229px;width:135px;height:49px;background:#fffcf3;overflow:hidden;font-size:20px;line-height:22.5px;color:#6c6c6c;padding:2px 3px 0 1px;text-align:center;padding:2px 4px 0 1px;">10</div>
<div class="ab" style="left:668px;top:279px;width:224px;height:48px;background:#fffcf3;overflow:hidden;font-size:20px;line-height:22.5px;color:#6c6c6c;padding:2px 3px 0 1px;">Unable to fly straight</div>
<div class="ab" style="left:893px;top:279px;width:151px;height:48px;background:#fffcf3;overflow:hidden;font-size:20px;line-height:22.5px;color:#6c6c6c;padding:2px 3px 0 1px;">Drone uncontrollable</div>
<div class="ab" style="left:1045px;top:279px;width:135px;height:48px;background:#fffcf3;overflow:hidden;font-size:20px;line-height:22.5px;color:#6c6c6c;padding:2px 3px 0 1px;text-align:center;padding:2px 4px 0 1px;">5</div>
<div class="ab" style="left:668px;top:328px;width:224px;height:49px;background:#f2f3f4;overflow:hidden;font-size:20px;line-height:22.5px;color:#6c6c6c;padding:2px 3px 0 1px;"></div>
<div class="ab" style="left:893px;top:328px;width:151px;height:49px;background:#f2f3f4;overflow:hidden;font-size:20px;line-height:22.5px;color:#6c6c6c;padding:2px 3px 0 1px;"></div>
<div class="ab" style="left:1045px;top:328px;width:135px;height:49px;background:#f2f3f4;overflow:hidden;font-size:20px;line-height:22.5px;color:#6c6c6c;padding:2px 3px 0 1px;"></div>
<div class="ab" style="left:668px;top:378px;width:224px;height:48px;background:#fffcf3;overflow:hidden;font-size:20px;line-height:22.5px;color:#6c6c6c;padding:2px 3px 0 1px;">Unable to control drone from controller</div>
<div class="ab" style="left:893px;top:378px;width:151px;height:48px;background:#fffcf3;overflow:hidden;font-size:20px;line-height:22.5px;color:#6c6c6c;padding:2px 3px 0 1px;">Drone inoperable</div>
<div class="ab" style="left:1045px;top:378px;width:135px;height:48px;background:#fffcf3;overflow:hidden;font-size:20px;line-height:22.5px;color:#6c6c6c;padding:2px 3px 0 1px;text-align:center;padding:2px 4px 0 1px;">7</div>
<div class="ab" style="left:668px;top:427px;width:224px;height:49px;background:#f2f3f4;overflow:hidden;font-size:20px;line-height:22.5px;color:#6c6c6c;padding:2px 3px 0 1px;"></div>
<div class="ab" style="left:893px;top:427px;width:151px;height:49px;background:#f2f3f4;overflow:hidden;font-size:20px;line-height:22.5px;color:#6c6c6c;padding:2px 3px 0 1px;"></div>
<div class="ab" style="left:1045px;top:427px;width:135px;height:49px;background:#f2f3f4;overflow:hidden;font-size:20px;line-height:22.5px;color:#6c6c6c;padding:2px 3px 0 1px;"></div>
<div class="ab" style="left:668px;top:477px;width:224px;height:48px;background:#fffcf3;overflow:hidden;font-size:20px;line-height:22.5px;color:#6c6c6c;padding:2px 3px 0 1px;">Possible collision</div>
<div class="ab" style="left:893px;top:477px;width:151px;height:48px;background:#fffcf3;overflow:hidden;font-size:20px;line-height:22.5px;color:#6c6c6c;padding:2px 3px 0 1px;">Drone inoperable</div>
<div class="ab" style="left:1045px;top:477px;width:135px;height:48px;background:#fffcf3;overflow:hidden;font-size:20px;line-height:22.5px;color:#6c6c6c;padding:2px 3px 0 1px;text-align:center;padding:2px 4px 0 1px;">7</div>
<div class="ab" style="left:668px;top:526px;width:224px;height:30px;background:#f2f3f4;overflow:hidden;font-size:20px;line-height:22.5px;color:#6c6c6c;padding:2px 3px 0 1px;"></div>
<div class="ab" style="left:893px;top:526px;width:151px;height:30px;background:#f2f3f4;overflow:hidden;font-size:20px;line-height:22.5px;color:#6c6c6c;padding:2px 3px 0 1px;"></div>
<div class="ab" style="left:1045px;top:526px;width:135px;height:30px;background:#f2f3f4;overflow:hidden;font-size:20px;line-height:22.5px;color:#6c6c6c;padding:2px 3px 0 1px;"></div>
<div class="ab" style="left:668px;top:557px;width:224px;height:49px;background:#fffcf3;overflow:hidden;font-size:20px;line-height:22.5px;color:#6c6c6c;padding:2px 3px 0 1px;">Possible collision</div>
<div class="ab" style="left:893px;top:557px;width:151px;height:49px;background:#fffcf3;overflow:hidden;font-size:20px;line-height:22.5px;color:#6c6c6c;padding:2px 3px 0 1px;">Drone inoperable</div>
<div class="ab" style="left:1045px;top:557px;width:135px;height:49px;background:#fffcf3;overflow:hidden;font-size:20px;line-height:22.5px;color:#6c6c6c;padding:2px 3px 0 1px;text-align:center;padding:2px 4px 0 1px;">7</div>
<div class="ab" style="left:668px;top:607px;width:224px;height:48px;background:#fffcf3;overflow:hidden;font-size:20px;line-height:22.5px;color:#6c6c6c;padding:2px 3px 0 1px;">Drone may spin in circles or crash</div>
<div class="ab" style="left:893px;top:607px;width:151px;height:48px;background:#fffcf3;overflow:hidden;font-size:20px;line-height:22.5px;color:#6c6c6c;padding:2px 3px 0 1px;">Drone inoperable</div>
<div class="ab" style="left:1045px;top:607px;width:135px;height:48px;background:#fffcf3;overflow:hidden;font-size:20px;line-height:22.5px;color:#6c6c6c;padding:2px 3px 0 1px;text-align:center;padding:2px 4px 0 1px;">7</div>
<div class="ab" style="left:668px;top:656px;width:224px;height:94px;background:#fffcf3;overflow:hidden;font-size:20px;line-height:22.5px;color:#6c6c6c;padding:2px 3px 0 1px;">Camera mounting plate cracks</div>
<div class="ab" style="left:893px;top:656px;width:151px;height:94px;background:#fffcf3;overflow:hidden;font-size:20px;line-height:22.5px;color:#6c6c6c;padding:2px 3px 0 1px;">Camera loosely attached to drone and may detach</div>
<div class="ab" style="left:1045px;top:656px;width:135px;height:94px;background:#fffcf3;overflow:hidden;font-size:20px;line-height:22.5px;color:#6c6c6c;padding:2px 3px 0 1px;text-align:center;padding:2px 4px 0 1px;">6</div>
<div class="ab" style="left:668px;top:751px;width:224px;height:93px;background:#fffcf3;overflow:hidden;font-size:20px;line-height:22.5px;color:#6c6c6c;padding:2px 3px 0 1px;">Camera cannot be mounted on drone for video recording</div>
<div class="ab" style="left:893px;top:751px;width:151px;height:93px;background:#fffcf3;overflow:hidden;font-size:20px;line-height:22.5px;color:#6c6c6c;padding:2px 3px 0 1px;">No video can be captured</div>
<div class="ab" style="left:1045px;top:751px;width:135px;height:93px;background:#fffcf3;overflow:hidden;font-size:20px;line-height:22.5px;color:#6c6c6c;padding:2px 3px 0 1px;text-align:center;padding:2px 4px 0 1px;">6</div>
<div class="ab" style="left:1181px;top:80px;width:209px;height:49px;background:#fcf0ea;overflow:hidden;font-size:20px;line-height:22.5px;color:#6c6c6c;padding:2px 3px 0 1px;">Degraded battery</div>
<div class="ab" style="left:1391px;top:80px;width:149px;height:49px;background:#fcf0ea;overflow:hidden;font-size:20px;line-height:22.5px;color:#6c6c6c;padding:2px 3px 0 1px;"></div>
<div class="ab" style="left:1541px;top:80px;width:149px;height:49px;background:#fcf0ea;overflow:hidden;font-size:20px;line-height:22.5px;color:#6c6c6c;padding:2px 3px 0 1px;"></div>
<div class="ab" style="left:1181px;top:130px;width:209px;height:49px;background:#fcf0ea;overflow:hidden;font-size:20px;line-height:22.5px;color:#6c6c6c;padding:2px 3px 0 1px;">Cathode wear out</div>
<div class="ab" style="left:1391px;top:130px;width:149px;height:49px;background:#fcf0ea;overflow:hidden;font-size:20px;line-height:22.5px;color:#6c6c6c;padding:2px 3px 0 1px;"></div>
<div class="ab" style="left:1541px;top:130px;width:149px;height:49px;background:#fcf0ea;overflow:hidden;font-size:20px;line-height:22.5px;color:#6c6c6c;padding:2px 3px 0 1px;"></div>
<div class="ab" style="left:1181px;top:180px;width:209px;height:48px;background:#fcf0ea;overflow:hidden;font-size:20px;line-height:22.5px;color:#6c6c6c;padding:2px 3px 0 1px;">Manufacturing and packaging defects</div>
<div class="ab" style="left:1391px;top:180px;width:149px;height:48px;background:#fcf0ea;overflow:hidden;font-size:20px;line-height:22.5px;color:#6c6c6c;padding:2px 3px 0 1px;"></div>
<div class="ab" style="left:1541px;top:180px;width:149px;height:48px;background:#fcf0ea;overflow:hidden;font-size:20px;line-height:22.5px;color:#6c6c6c;padding:2px 3px 0 1px;"></div>
<div class="ab" style="left:1181px;top:229px;width:209px;height:49px;background:#fcf0ea;overflow:hidden;font-size:20px;line-height:22.5px;color:#6c6c6c;padding:2px 3px 0 1px;">Structural failure</div>
<div class="ab" style="left:1391px;top:229px;width:149px;height:49px;background:#fcf0ea;overflow:hidden;font-size:20px;line-height:22.5px;color:#6c6c6c;padding:2px 3px 0 1px;"></div>
<div class="ab" style="left:1541px;top:229px;width:149px;height:49px;background:#fcf0ea;overflow:hidden;font-size:20px;line-height:22.5px;color:#6c6c6c;padding:2px 3px 0 1px;"></div>
<div class="ab" style="left:1181px;top:279px;width:209px;height:48px;background:#fcf0ea;overflow:hidden;font-size:20px;line-height:22.5px;color:#6c6c6c;padding:2px 3px 0 1px;">High winds and gusts</div>
<div class="ab" style="left:1391px;top:279px;width:149px;height:48px;background:#fcf0ea;overflow:hidden;font-size:20px;line-height:22.5px;color:#6c6c6c;padding:2px 3px 0 1px;"></div>
<div class="ab" style="left:1541px;top:279px;width:149px;height:48px;background:#fcf0ea;overflow:hidden;font-size:20px;line-height:22.5px;color:#6c6c6c;padding:2px 3px 0 1px;"></div>
<div class="ab" style="left:1181px;top:328px;width:209px;height:49px;background:#fcf0ea;overflow:hidden;font-size:20px;line-height:22.5px;color:#6c6c6c;padding:2px 3px 0 1px;">Motor malfunction</div>
<div class="ab" style="left:1391px;top:328px;width:149px;height:49px;background:#fcf0ea;overflow:hidden;font-size:20px;line-height:22.5px;color:#6c6c6c;padding:2px 3px 0 1px;"></div>
<div class="ab" style="left:1541px;top:328px;width:149px;height:49px;background:#fcf0ea;overflow:hidden;font-size:20px;line-height:22.5px;color:#6c6c6c;padding:2px 3px 0 1px;"></div>
<div class="ab" style="left:1181px;top:378px;width:209px;height:48px;background:#fcf0ea;overflow:hidden;font-size:20px;line-height:22.5px;color:#6c6c6c;padding:2px 3px 0 1px;">Touchpanel inoperable (Ground Controller)</div>
<div class="ab" style="left:1391px;top:378px;width:149px;height:48px;background:#fcf0ea;overflow:hidden;font-size:20px;line-height:22.5px;color:#6c6c6c;padding:2px 3px 0 1px;"></div>
<div class="ab" style="left:1541px;top:378px;width:149px;height:48px;background:#fcf0ea;overflow:hidden;font-size:20px;line-height:22.5px;color:#6c6c6c;padding:2px 3px 0 1px;"></div>
<div class="ab" style="left:1181px;top:427px;width:209px;height:49px;background:#fcf0ea;overflow:hidden;font-size:20px;line-height:22.5px;color:#6c6c6c;padding:2px 3px 0 1px;">Loss of communication (Ground Controller)</div>
<div class="ab" style="left:1391px;top:427px;width:149px;height:49px;background:#fcf0ea;overflow:hidden;font-size:20px;line-height:22.5px;color:#6c6c6c;padding:2px 3px 0 1px;"></div>
<div class="ab" style="left:1541px;top:427px;width:149px;height:49px;background:#fcf0ea;overflow:hidden;font-size:20px;line-height:22.5px;color:#6c6c6c;padding:2px 3px 0 1px;"></div>
<div class="ab" style="left:1181px;top:477px;width:209px;height:48px;background:#fcf0ea;overflow:hidden;font-size:20px;line-height:22.5px;color:#6c6c6c;padding:2px 3px 0 1px;">Motor mechanical failure</div>
<div class="ab" style="left:1391px;top:477px;width:149px;height:48px;background:#fcf0ea;overflow:hidden;font-size:20px;line-height:22.5px;color:#6c6c6c;padding:2px 3px 0 1px;"></div>
<div class="ab" style="left:1541px;top:477px;width:149px;height:48px;background:#fcf0ea;overflow:hidden;font-size:20px;line-height:22.5px;color:#6c6c6c;padding:2px 3px 0 1px;"></div>
<div class="ab" style="left:1181px;top:526px;width:209px;height:30px;background:#fcf0ea;overflow:hidden;font-size:20px;line-height:22.5px;color:#6c6c6c;padding:2px 3px 0 1px;">Wear</div>
<div class="ab" style="left:1391px;top:526px;width:149px;height:30px;background:#fcf0ea;overflow:hidden;font-size:20px;line-height:22.5px;color:#6c6c6c;padding:2px 3px 0 1px;"></div>
<div class="ab" style="left:1541px;top:526px;width:149px;height:30px;background:#fcf0ea;overflow:hidden;font-size:20px;line-height:22.5px;color:#6c6c6c;padding:2px 3px 0 1px;"></div>
<div class="ab" style="left:1181px;top:557px;width:209px;height:49px;background:#fcf0ea;overflow:hidden;font-size:20px;line-height:22.5px;color:#6c6c6c;padding:2px 3px 0 1px;">High voltage</div>
<div class="ab" style="left:1391px;top:557px;width:149px;height:49px;background:#fcf0ea;overflow:hidden;font-size:20px;line-height:22.5px;color:#6c6c6c;padding:2px 3px 0 1px;"></div>
<div class="ab" style="left:1541px;top:557px;width:149px;height:49px;background:#fcf0ea;overflow:hidden;font-size:20px;line-height:22.5px;color:#6c6c6c;padding:2px 3px 0 1px;"></div>
<div class="ab" style="left:1181px;top:607px;width:209px;height:48px;background:#fcf0ea;overflow:hidden;font-size:20px;line-height:22.5px;color:#6c6c6c;padding:2px 3px 0 1px;">Flight controller short</div>
<div class="ab" style="left:1391px;top:607px;width:149px;height:48px;background:#fcf0ea;overflow:hidden;font-size:20px;line-height:22.5px;color:#6c6c6c;padding:2px 3px 0 1px;"></div>
<div class="ab" style="left:1541px;top:607px;width:149px;height:48px;background:#fcf0ea;overflow:hidden;font-size:20px;line-height:22.5px;color:#6c6c6c;padding:2px 3px 0 1px;"></div>
<div class="ab" style="left:1181px;top:656px;width:209px;height:94px;background:#fcf0ea;overflow:hidden;font-size:20px;line-height:22.5px;color:#6c6c6c;padding:2px 3px 0 1px;">Hard landing</div>
<div class="ab" style="left:1391px;top:656px;width:149px;height:94px;background:#fcf0ea;overflow:hidden;font-size:20px;line-height:22.5px;color:#6c6c6c;padding:2px 3px 0 1px;">Material hardness of camera mounting plate</div>
<div class="ab" style="left:1541px;top:656px;width:149px;height:94px;background:#fcf0ea;overflow:hidden;font-size:20px;line-height:22.5px;color:#6c6c6c;padding:2px 3px 0 1px;"></div>
<div class="ab" style="left:1181px;top:751px;width:209px;height:93px;background:#fcf0ea;overflow:hidden;font-size:20px;line-height:22.5px;color:#6c6c6c;padding:2px 3px 0 1px;">Improperly designed camera mounting plate</div>
<div class="ab" style="left:1391px;top:751px;width:149px;height:93px;background:#fcf0ea;overflow:hidden;font-size:20px;line-height:22.5px;color:#6c6c6c;padding:2px 3px 0 1px;"></div>
<div class="ab" style="left:1541px;top:751px;width:149px;height:93px;background:#fcf0ea;overflow:hidden;font-size:20px;line-height:22.5px;color:#6c6c6c;padding:2px 3px 0 1px;"></div>
<div class="ab" style="left:1691px;top:80px;width:276px;height:49px;background:#fcf0ea;overflow:hidden;font-size:20px;line-height:22.5px;color:#6c6c6c;padding:2px 3px 0 1px;white-space:nowrap;">Replace battery<br>periodically</div>
<div class="ab" style="left:1691px;top:130px;width:276px;height:49px;background:#fcf0ea;overflow:hidden;font-size:20px;line-height:22.5px;color:#6c6c6c;padding:2px 3px 0 1px;white-space:nowrap;">Replace battery<br>periodically</div>
<div class="ab" style="left:1691px;top:180px;width:276px;height:48px;background:#fcf0ea;overflow:hidden;font-size:20px;line-height:22.5px;color:#6c6c6c;padding:2px 3px 0 1px;white-space:nowrap;"></div>
<div class="ab" style="left:1691px;top:229px;width:276px;height:49px;background:#fcf0ea;overflow:hidden;font-size:20px;line-height:22.5px;color:#6c6c6c;padding:2px 3px 0 1px;white-space:nowrap;">Operating instructions<br>(4)</div>
<div class="ab" style="left:1691px;top:279px;width:276px;height:48px;background:#fcf0ea;overflow:hidden;font-size:20px;line-height:22.5px;color:#6c6c6c;padding:2px 3px 0 1px;white-space:nowrap;">Operating instructions<br>(4)</div>
<div class="ab" style="left:1691px;top:328px;width:276px;height:49px;background:#fcf0ea;overflow:hidden;font-size:20px;line-height:22.5px;color:#6c6c6c;padding:2px 3px 0 1px;white-space:nowrap;">Operating instructions<br>(4)</div>
<div class="ab" style="left:1691px;top:378px;width:276px;height:48px;background:#fcf0ea;overflow:hidden;font-size:20px;line-height:22.5px;color:#6c6c6c;padding:2px 3px 0 1px;white-space:nowrap;"></div>
<div class="ab" style="left:1691px;top:427px;width:276px;height:49px;background:#fcf0ea;overflow:hidden;font-size:20px;line-height:22.5px;color:#6c6c6c;padding:2px 3px 0 1px;white-space:nowrap;"></div>
<div class="ab" style="left:1691px;top:477px;width:276px;height:48px;background:#fcf0ea;overflow:hidden;font-size:20px;line-height:22.5px;color:#6c6c6c;padding:2px 3px 0 1px;white-space:nowrap;"></div>
<div class="ab" style="left:1691px;top:526px;width:276px;height:30px;background:#fcf0ea;overflow:hidden;font-size:20px;line-height:22.5px;color:#6c6c6c;padding:2px 3px 0 1px;white-space:nowrap;"></div>
<div class="ab" style="left:1691px;top:557px;width:276px;height:49px;background:#fcf0ea;overflow:hidden;font-size:20px;line-height:22.5px;color:#6c6c6c;padding:2px 3px 0 1px;white-space:nowrap;"></div>
<div class="ab" style="left:1691px;top:607px;width:276px;height:48px;background:#fcf0ea;overflow:hidden;font-size:20px;line-height:22.5px;color:#6c6c6c;padding:2px 3px 0 1px;white-space:nowrap;"></div>
<div class="ab" style="left:1691px;top:656px;width:276px;height:94px;background:#fcf0ea;overflow:hidden;font-size:20px;line-height:22.5px;color:#6c6c6c;padding:2px 3px 0 1px;white-space:nowrap;"></div>
<div class="ab" style="left:1691px;top:751px;width:276px;height:93px;background:#fcf0ea;overflow:hidden;font-size:20px;line-height:22.5px;color:#6c6c6c;padding:2px 3px 0 1px;white-space:nowrap;"></div>
<div class="ab" style="left:1600px;top:658px;width:28px;height:28px;"><svg width="28" height="28"><path d="M14 2 L26 14 L14 26 L2 14 Z" fill="none" stroke="#222" stroke-width="2.8" stroke-linejoin="round"/></svg></div>
<div class="ab" style="left:60px;top:81px;width:211px;height:396px;border-style:solid;border-color:#000;border-width:1px 3px 3px 1px"></div>
</div>
<div class="ab" style="left:2090px;top:145px;width:27px;height:908px;background:#eef2f6"></div>
<div class="ab" style="left:2090px;top:145px;width:26px;height:26px;background:#dde8f3;border:1px solid #95a4b3;border-radius:2px"></div>
<div class="ab" style="left:2097px;top:155px;width:0;height:0;border-left:5.5px solid transparent;border-right:5.5px solid transparent;border-bottom:6px solid #5f6a4c"></div>
<div class="ab" style="left:2090px;top:172px;width:26px;height:854px;background:#e7ecf4;border:1px solid #8e9dac;border-radius:3px"></div>
<div class="ab" style="left:2097px;top:595px;width:13px;height:2px;background:#6c7060"></div>
<div class="ab" style="left:2097px;top:598.5px;width:13px;height:2px;background:#6c7060"></div>
<div class="ab" style="left:2090px;top:1027px;width:26px;height:26px;background:#dde8f3;border:1px solid #95a4b3;border-radius:2px"></div>
<div class="ab" style="left:2097.5px;top:1037px;width:0;height:0;border-left:5.5px solid transparent;border-right:5.5px solid transparent;border-top:6px solid #5f6a4c"></div>
<div class="ab" style="left:333px;top:1053px;width:1757px;height:26px;background:linear-gradient(#f3f3f3,#fbf8f8)"></div>
<div class="ab" style="left:333px;top:1053px;width:26px;height:26px;background:#dde8f3;border:1px solid #95a4b3;border-radius:2px"></div>
<div class="ab" style="left:341.5px;top:1061px;width:0;height:0;border-top:5.5px solid transparent;border-bottom:5.5px solid transparent;border-right:6.5px solid #5f6a4c"></div>
<div class="ab" style="left:360px;top:1053px;width:1135px;height:26px;background:#e7ecf4;border:1px solid #8e9dac;border-radius:3px"></div>
<div class="ab" style="left:924px;top:1061px;width:1.5px;height:11px;background:#7d8a70"></div>
<div class="ab" style="left:928px;top:1061px;width:1.5px;height:11px;background:#7d8a70"></div>
<div class="ab" style="left:2064px;top:1053px;width:26px;height:26px;background:#dde8f3;border:1px solid #95a4b3;border-radius:2px"></div>
<div class="ab" style="left:2074px;top:1061px;width:0;height:0;border-top:5.5px solid transparent;border-bottom:5.5px solid transparent;border-left:6.5px solid #5f6a4c"></div>
<div class="ab" style="left:2090px;top:1053px;width:27px;height:27px;background:#fff"></div>
</body></html>
